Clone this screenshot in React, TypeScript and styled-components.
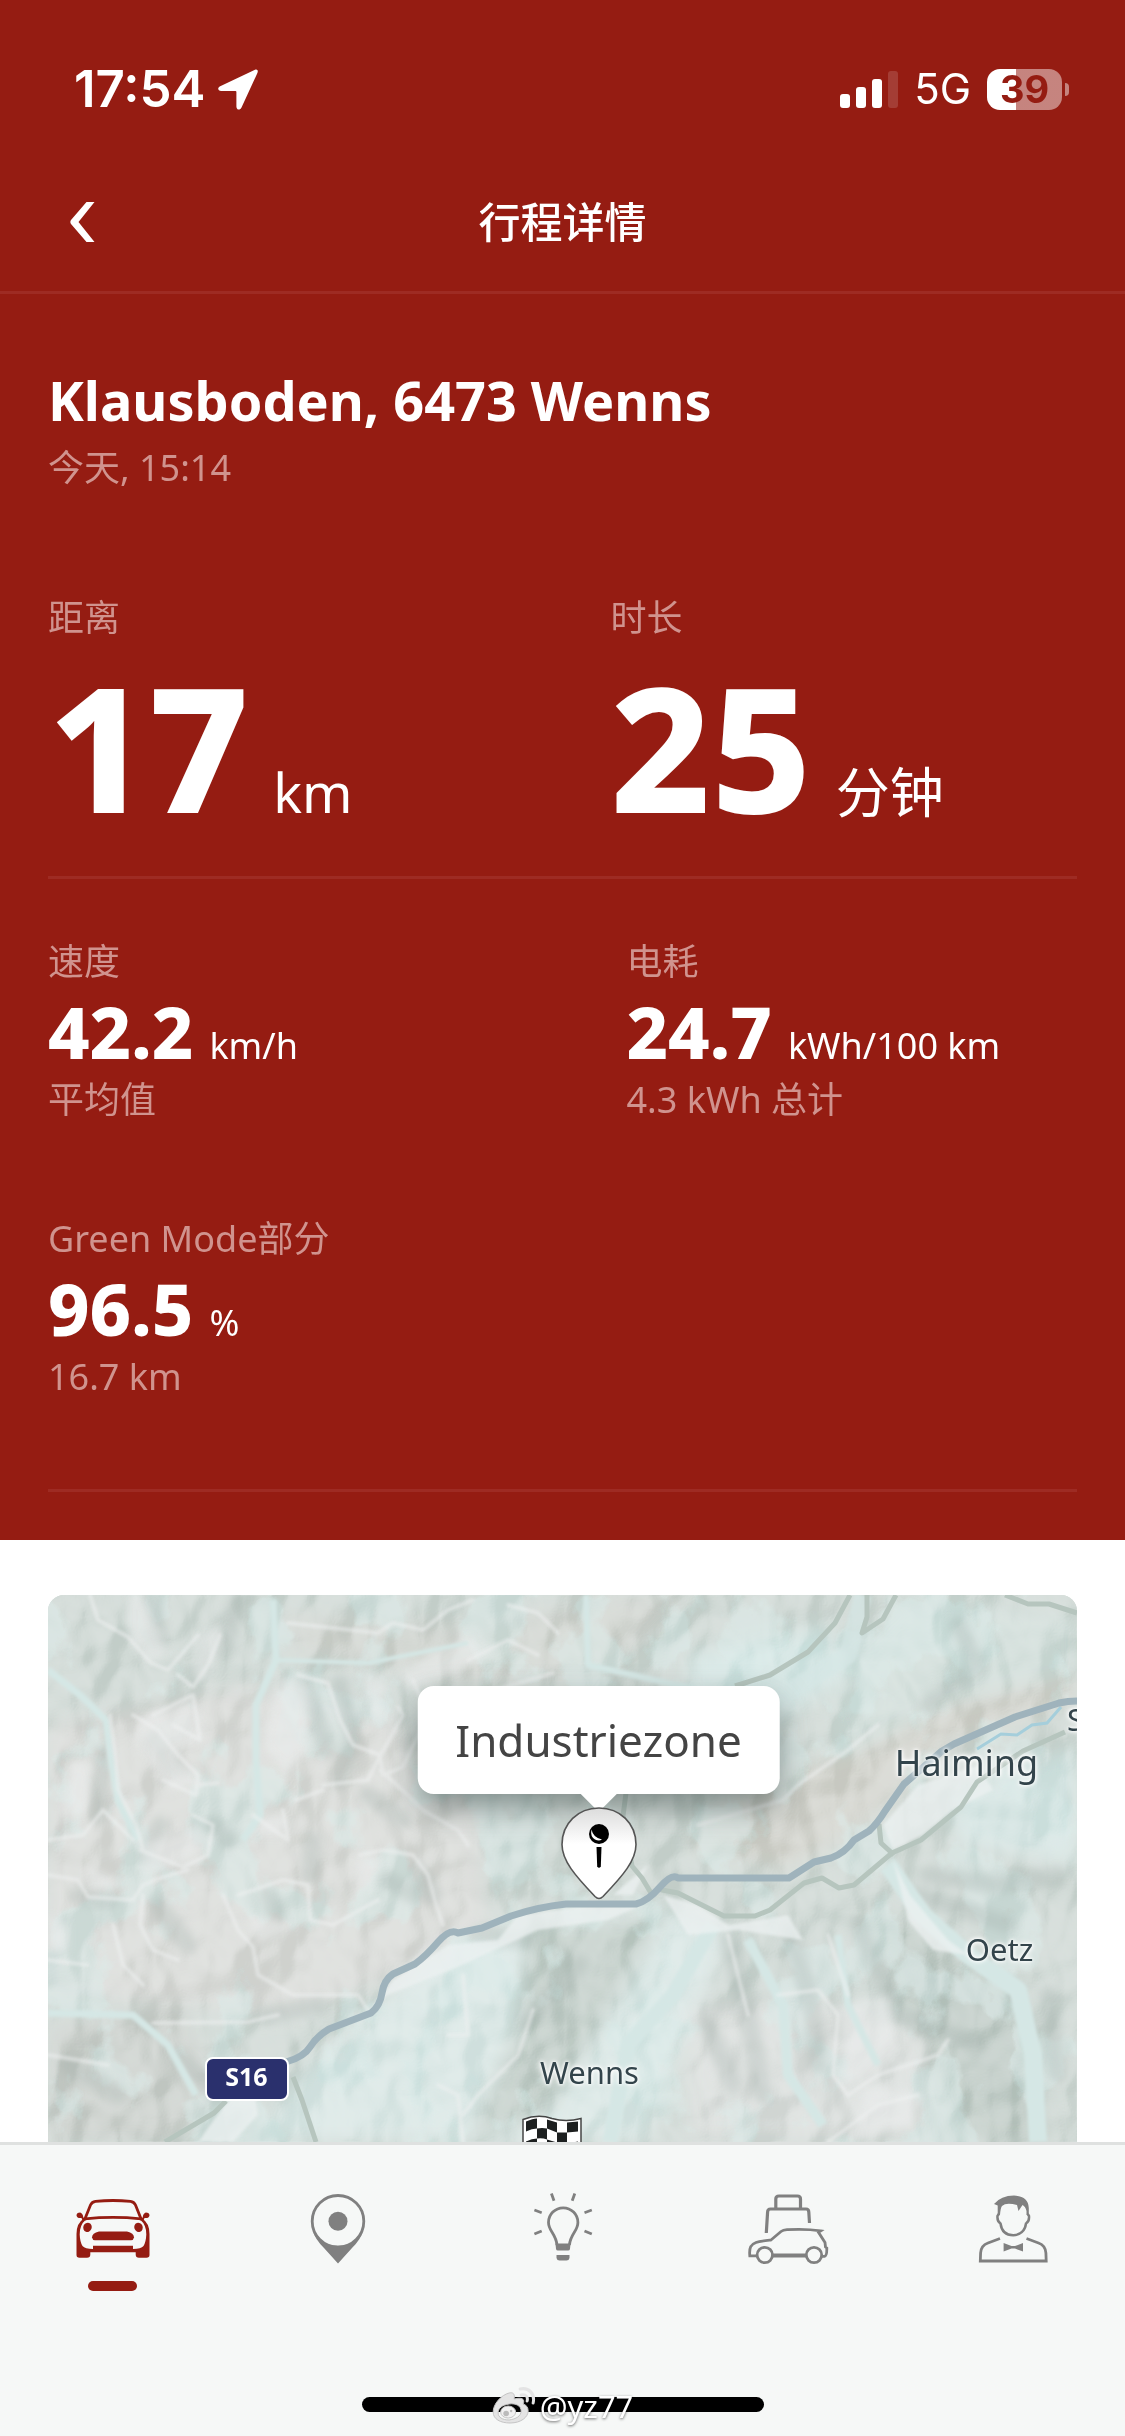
import { ReactNode, useState } from 'react';
import styled, { createGlobalStyle } from 'styled-components';

const red = '#951c12';
const grey = '#808080';

const GlobalStyle = createGlobalStyle`
  * {
    box-sizing: border-box;
  }

  body {
    margin: 0;
    font-family: 'Noto Sans', 'Noto Sans CJK SC', sans-serif;
    background-color: #fff;
  }
`;

const Screen = styled.div`
  display: flex;
  flex-direction: column;
  height: 100vh;
  overflow: hidden;
`;

const TopPanel = styled.div`
  flex-shrink: 0;
  color: #fff;
  background-color: ${red};
`;

const StatusBar = styled.div`
  display: flex;
  align-items: center;
  justify-content: space-between;
  height: 152px;
  padding: 26px 56px 0 74px;
  font-family: Inter, sans-serif;
`;

const StatusGroup = styled.div<{ $gap: number }>`
  display: flex;
  align-items: center;
  gap: ${({ $gap }) => $gap}px;
`;

const Clock = styled.span`
  font-size: 51px;
  line-height: 60px;
  font-weight: 600;
`;

const Network = styled.span`
  font-size: 42px;
  line-height: 60px;
`;

const BatteryWrap = styled.div`
  display: flex;
  align-items: center;
  gap: 3px;
`;

const Battery = styled.div`
  width: 75px;
  height: 41px;
  border-radius: 13px;
  background: linear-gradient(to right, #fff 39%, rgba(255, 255, 255, 0.46) 39%);
  color: ${red};
  font-size: 38px;
  line-height: 41px;
  font-weight: 700;
  text-align: center;
`;

const BatteryCap = styled.div`
  width: 4px;
  height: 13px;
  border-radius: 0 4px 4px 0;
  background-color: rgba(255, 255, 255, 0.46);
`;

const Header = styled.header`
  display: grid;
  grid-template-columns: 120px 1fr 120px;
  align-items: center;
  height: 142px;
  border-bottom: 3px solid #9e2b23;
`;

const BackButton = styled.button`
  display: flex;
  align-items: center;
  height: 100%;
  padding: 0 0 0 70px;
  border: none;
  background-color: transparent;
  color: #fff;
  cursor: pointer;
`;

const PageTitle = styled.h1`
  margin: 0;
  font-size: 42px;
  line-height: 60px;
  font-weight: 500;
  text-align: center;
`;

const Trip = styled.section`
  padding: 70px 48px 48px;
`;

const Place = styled.h2`
  margin: 0 0 8px;
  font-size: 54px;
  line-height: 72px;
  font-weight: 700;
`;

const Muted = styled.p`
  margin: 0;
  font-size: 36px;
  line-height: 48px;
  font-weight: 400;
  color: #d0938e;
`;

const Totals = styled.div`
  display: grid;
  grid-template-columns: 1fr 1fr;
  column-gap: 96px;
  margin-top: 102px;
`;

const Details = styled.div`
  display: grid;
  grid-template-columns: 1fr 1fr;
  gap: 91px 128px;
  padding: 59px 0 88px;
`;

const Value = styled.div<{ $large?: boolean }>`
  display: flex;
  align-items: baseline;
  gap: ${({ $large }) => ($large ? 24 : 16)}px;
  height: ${({ $large }) => ($large ? 160 : 72)}px;
  margin: ${({ $large }) => ($large ? '24px 0 50px' : '9px 0')};
  white-space: nowrap;
`;

const Amount = styled.strong<{ $large?: boolean }>`
  font-size: ${({ $large }) => ($large ? 174 : 72)}px;
  line-height: ${({ $large }) => ($large ? 160 : 72)}px;
  font-weight: 800;
`;

const Unit = styled.span<{ $large?: boolean }>`
  font-size: ${({ $large }) => ($large ? 54 : 36)}px;
  line-height: ${({ $large }) => ($large ? 60 : 48)}px;
  font-weight: 400;
`;

const Divider = styled.hr`
  height: 3px;
  margin: 0;
  border: none;
  background-color: #9e2b23;
`;

const MapSection = styled.section`
  display: flex;
  flex: 1;
  min-height: 0;
  padding: 55px 48px 0;
`;

const MapCard = styled.div`
  position: relative;
  flex: 1;
  overflow: hidden;
  border-radius: 16px 16px 0 0;
  background-color: #d3dcd8;
`;

const MapDrawing = styled.svg`
  display: block;
  width: 100%;
  height: 100%;
`;

/* x is measured from the middle of the map */
const Spot = styled.div<{ $x: number; $y: number }>`
  position: absolute;
  left: calc(50% + ${({ $x }) => $x}px);
  top: ${({ $y }) => $y}px;
  transform: translate(-50%, -50%);
`;

const Town = styled.span<{ $big?: boolean }>`
  display: block;
  font-size: ${({ $big }) => ($big ? 36 : 31)}px;
  line-height: 48px;
  color: #33444b;
  text-shadow: 0 0 3px #fff, 0 0 4px #fff, 0 0 6px #fff;
`;

const RoadSign = styled.span`
  display: block;
  width: 84px;
  height: 44px;
  border: 2px solid #fff;
  border-radius: 8px;
  background-color: #2a306d;
  color: #fff;
  font-size: 25px;
  line-height: 35px;
  font-weight: 700;
  text-align: center;
`;

const Bubble = styled.div`
  position: relative;
  padding: 24px 38px;
  border-radius: 16px;
  background-color: #fff;
  box-shadow: 0 14px 30px rgba(60, 75, 72, 0.55);
  color: #444;
  font-size: 44px;
  line-height: 60px;

  &::after {
    content: '';
    position: absolute;
    top: 100%;
    left: 50%;
    margin-left: -18px;
    border: 18px solid transparent;
    border-top-color: #fff;
    border-bottom: none;
  }
`;

const BottomPanel = styled.div`
  flex-shrink: 0;
  padding-bottom: 24px;
  border-top: 3px solid #dfe1e0;
  background-color: #f6f8f7;
`;

const Tabs = styled.nav`
  display: flex;
  height: 228px;
  padding-top: 39px;
`;

const Tab = styled.button<{ $active: boolean }>`
  display: flex;
  flex: 1;
  flex-direction: column;
  align-items: center;
  gap: 7px;
  padding: 0;
  border: none;
  background-color: transparent;
  color: ${({ $active }) => ($active ? red : grey)};
  cursor: pointer;

  &::after {
    content: '';
    width: 49px;
    height: 10px;
    border-radius: 5px;
    background-color: ${({ $active }) => ($active ? red : 'transparent')};
  }
`;

const HomeArea = styled.div`
  position: relative;
  display: flex;
  justify-content: center;
  padding-top: 24px;
`;

const HomeBar = styled.div`
  width: 402px;
  height: 15px;
  border-radius: 8px;
  background-color: #000;
`;

const Watermark = styled.div`
  position: absolute;
  left: 50%;
  bottom: -14px;
  display: flex;
  align-items: center;
  gap: 4px;
  transform: translateX(-50%);
  color: #fff;
  font-size: 31px;
  line-height: 40px;
  text-shadow: 0 1px 3px rgba(0, 0, 0, 0.6);
`;

const LocationArrow = () => (
  <svg width="40" height="41" viewBox="0 0 40 41" fill="currentColor" aria-hidden="true">
    <path d="M37 .8 2.2 17.2C-.9 18.7-.2 22 3.200 22H17.500c.6 0 .9.3.9.9V37.500c0 3.600 3.600 4.200 5.100 1L39.400 4C40.500 1.600 39.200-.2 37 .8Z" />
  </svg>
);

const Signal = () => (
  <svg width="58" height="37" viewBox="0 0 58 37" fill="currentColor" aria-hidden="true">
    <rect x="0" y="23" width="10" height="14" rx="3" />
    <rect x="16" y="16" width="10" height="21" rx="3" />
    <rect x="32" y="8" width="10" height="29" rx="3" />
    <rect x="48" y="0" width="10" height="37" rx="3" opacity=".15" />
  </svg>
);

const BackIcon = () => (
  <svg width="25" height="40" viewBox="0 0 25 40" fill="currentColor" aria-hidden="true">
    <path d="M16.500 0H24.500L8.500 20 24.500 40H16.500L1 22Q-.3 20 1 18Z" />
  </svg>
);

const CarIcon = () => (
  <svg width="90" height="90" viewBox="0 0 90 90" fill="currentColor" aria-hidden="true">
    <path d="M16.500 36 22.500 21Q24 17.700 27.500 17.300Q45 15.700 62.500 17.300Q66 17.700 67.500 21L73.500 36" fill="none" stroke="currentColor" strokeWidth="2.800" />
    <path d="M17 34.800Q45 32 73 34.800" fill="none" stroke="currentColor" strokeWidth="2.800" />
    <path d="M8.500 31.500Q8.500 28.500 12.200 28.500 15 29.500 15.200 33L17 36 14.500 36.500 13.500 34Q9 34.500 8.500 31.500Z" />
    <path d="M81.500 31.500Q81.500 28.500 77.800 28.500 75 29.500 74.800 33L73 36 75.500 36.500 76.500 34Q81 34.500 81.500 31.500Z" />
    <path
      fillRule="evenodd"
      d="M16 34.500Q8.500 39 8.500 50V71Q8.500 73.800 11.500 73.800H19Q22.300 73.800 22.300 70.500V68.300H67.700V70.500Q67.700 73.800 71 73.800H78.500Q81.500 73.800 81.500 71V50Q81.500 39 74 34.500L72 35.500Q78.500 41 78.300 50.500Q78 58 75.500 62 73 65 65 65V61.700H25V65Q17 65 14.500 62 12 58 11.700 50.500 11.500 41 18 35.500Z"
    />
    <ellipse cx="19.500" cy="43.300" rx="4.200" ry="4.700" transform="rotate(20 19.500 43.300)" />
    <ellipse cx="70.500" cy="43.300" rx="4.200" ry="4.700" transform="rotate(-20 70.500 43.300)" />
    <path d="M31 47.500H59Q66 49 66 53.500 65.500 56.200 63 56.200H27Q24.500 56.200 24 53.500 24 49 31 47.500Z" />
  </svg>
);

const PlaceIcon = () => (
  <svg width="90" height="90" viewBox="0 0 90 90" fill="currentColor" aria-hidden="true">
    <circle cx="45" cy="37.300" r="25.800" fill="none" stroke="currentColor" strokeWidth="2.800" />
    <circle cx="45" cy="37.300" r="9.500" />
    <path d="M19.800 47Q22 55 31 64L45 79.500 59 64Q68 55 70.200 47 63 61.800 45 61.800 27 61.800 19.800 47Z" />
  </svg>
);

const BulbIcon = () => (
  <svg width="90" height="90" viewBox="0 0 90 90" fill="currentColor" aria-hidden="true">
    <path d="M39 61C38 50 30.500 47 30.500 38.500A14.700 14.700 0 0 1 59.900 38.500C59.900 47 52.500 50 51.400 61" fill="none" stroke="currentColor" strokeWidth="2.800" />
    <path d="M37.500 59.500H52.500L52 65Q51.700 66.500 50 66.500H40Q38.300 66.500 38 65ZM38.500 71H51.500V74Q51 76.500 48.500 76.500H41.500Q39 76.500 38.500 74Z" />
    <path d="M33.400 9.500 36 16.800M56.800 9.500 54.200 16.800M73.800 26 66.500 28.700M73.800 50 66.500 47M16.400 26 23.700 28.700M16.400 50 23.700 47" stroke="currentColor" strokeWidth="2.800" />
  </svg>
);

const TravelIcon = () => (
  <svg width="90" height="90" viewBox="0 0 90 90" fill="none" stroke="currentColor" strokeWidth="2.800" aria-hidden="true">
    <path d="M32.800 24V15Q32.800 12 36 12H54.300Q57.500 12 57.500 15V24" strokeWidth="3.200" />
    <path d="M23.300 49 24.600 28Q24.700 25 27.500 25H63Q65.700 25 65.800 28L66.500 39" strokeWidth="3.200" />
    <path d="M14 71.800H6.800C6 63 8 60.500 13 58.500 17 57 22 56.600 28 56L38 47.500Q40 46 44 45.700 62 44.500 77.800 46.800L75.500 48.300 82 58.500 82.500 63 83.800 64Q84 72 81.500 72.300H79" />
    <path d="M30 71.500H63" strokeWidth="4.200" />
    <circle cx="21.800" cy="71" r="7.700" />
    <circle cx="71" cy="71" r="7.700" />
  </svg>
);

const PersonIcon = () => (
  <svg width="90" height="90" viewBox="0 0 90 90" fill="currentColor" aria-hidden="true">
    <path d="M26 20Q33 11.500 46 11.500 60.500 12 60.800 24V31H58.500V27Q57.500 22.500 54.500 21L50.500 27 49 21Q38 18 34 22 32.500 24 32 31H29.700V21.500Z" />
    <path d="M30.800 30 29.500 32Q29 37.500 32.500 39.500C33.500 47 38 51.200 45.200 51.200 52 51.200 57 47 58 39.500Q61.500 37.500 61 32L59.700 30" fill="none" stroke="currentColor" strokeWidth="2.500" />
    <path d="M32 54.500 20 59Q13 61.500 12.600 69L12.300 77H78.200L77.900 69Q77.500 61.500 70.500 59L58.500 54.500" fill="none" stroke="currentColor" strokeWidth="2.800" />
    <path d="M35.600 59 43.500 62H47L55 59V67.500L47 64.500H43.500L35.600 67.500Z" />
  </svg>
);

const WeiboIcon = () => (
  <svg width="44" height="38" viewBox="0 0 44 38" aria-hidden="true">
    <path
      fillRule="evenodd"
      d="M17 6C9 8 1 17 1 25 1 32 8 36 18 36 29 36 36 30 36 24 36 20 34 18 31 17 33 12 30 10 22 12 23 7 21 5 17 6ZM17 17C24 16 29 19 29 24 29 29 24 32 17 33 10 33 6 30 6 26 6 21 10 18 17 17Z"
      fill="#e4e4e4"
      stroke="#c4c4c4"
    />
    <ellipse cx="16" cy="25" rx="7.500" ry="6" fill="#f1f1f1" stroke="#c4c4c4" />
    <circle cx="14" cy="26.500" r="2.800" fill="#bbb" />
    <circle cx="19" cy="24" r="1.200" fill="#bbb" />
    <path d="M28 2C37 0 43 7 41 16M29 8C34 7 36 10 35 14" fill="none" stroke="#e4e4e4" strokeWidth="3" strokeLinecap="round" />
  </svg>
);

const PinMarker = () => (
  <svg width="78" height="94" viewBox="0 0 78 94" aria-hidden="true">
    <defs>
      <linearGradient id="pinShade" x1="0" y1="0" x2="0" y2="1">
        <stop offset="0" stopColor="#dcdcdc" />
        <stop offset=".4" stopColor="#fff" />
      </linearGradient>
    </defs>
    <path d="M39 1.500C18 1.500 2 17 2 38 2 54 15 69 35 90Q39 94 43 90C63 69 76 54 76 38 76 17 60 1.500 39 1.500Z" fill="url(#pinShade)" stroke="#555" strokeWidth="1.600" />
    <circle cx="39" cy="27.500" r="10" />
    <path d="M31.500 23Q30 30 35 33 39 35 42 33 33 31 31.500 23Z" fill="#fff" />
    <path d="M36.500 40.500H41.500L40.800 60Q39 62.500 37.200 60Z" />
  </svg>
);

const FinishFlag = () => (
  <svg width="62" height="46" viewBox="0 0 62 46" aria-hidden="true">
    <path d="M2 5Q17-1 31 4 45 8 60 4V46H2Z" fill="#fff" stroke="#444" strokeWidth="1.500" />
    <path d="M5 7Q12 4 16 4V14Q11 14 5 17ZM26 5 36 8V18L26 14ZM46 8 57 7V17L46 18ZM16 14Q21 13 26 14V25Q21 23 16 24ZM36 18 46 18V29L36 28ZM5 27Q11 24 16 24V35L5 38ZM26 25 36 28V38L26 35ZM46 29 57 27V38L46 39ZM16 35H26V46H16ZM36 38H46V46H36Z" fill="#1d2020" />
  </svg>
);

const Terrain = () => (
  <MapDrawing viewBox="0 0 1029 547" preserveAspectRatio="xMidYMin slice" aria-hidden="true">
    <defs>
      <filter id="relief" x="0" y="0" width="100%" height="100%" colorInterpolationFilters="sRGB">
        <feTurbulence type="fractalNoise" baseFrequency=".014 .011" numOctaves="3" seed="8" />
        <feDiffuseLighting surfaceScale="50" diffuseConstant="1" lightingColor="#fff">
          <feDistantLight azimuth="215" elevation="48" />
        </feDiffuseLighting>
      </filter>
      <filter id="cover" x="0" y="0" width="100%" height="100%" colorInterpolationFilters="sRGB">
        <feTurbulence type="fractalNoise" baseFrequency=".014 .012" numOctaves="5" seed="21" />
        <feColorMatrix values="0 0 0 0 .84  0 0 0 0 .91  0 0 0 0 .9  14 0 0 0 -7.500" />
      </filter>
      <filter id="soft">
        <feGaussianBlur stdDeviation="9" />
      </filter>
      <filter id="edge">
        <feGaussianBlur stdDeviation="1.500" />
      </filter>
      <filter id="slope">
        <feGaussianBlur stdDeviation="4" />
      </filter>
    </defs>
    <rect width="1029" height="547" fill="#d0d9d5" />

    <g filter="url(#soft)">
      <path d="M0 130 200 90 340 120 430 200 440 350 240 420 0 400Z" fill="#dadcd9" />
      <path d="M230 20 420 30 560 0 640 0 560 80 420 90 250 60Z" fill="#d2d6d1" />
      <path d="M860 0 1029 20V90L900 130 800 180 780 80Z" fill="#d2deda" />
      <path d="M640 250 700 180 800 160 900 110 1029 80V105L900 150 820 230 740 275Z" fill="#d4d5cf" />
      <path d="M260 470 400 350 520 318 620 312 680 340 620 480 600 547H200Z" fill="#dae7e5" />
      <path d="M480 330 620 320 560 420 500 520 420 547 470 430Z" fill="#c5d0cb" />
      <path d="M820 310 900 350 980 400 1000 547H930L850 420Z" fill="#c2cdc8" />
      <path d="M0 430 130 410 180 500 120 547H0Z" fill="#cdd2ce" />
      <path d="M640 410 760 400 880 440 880 547H640Z" fill="#dbdfdd" />
      <path d="M900 200 1029 150V270L910 250Z" fill="#d6e5e3" />
      <path d="M640 60 780 30 800 80 700 150 640 180Z" fill="#d5e6e4" />
    </g>

    <rect width="1029" height="547" filter="url(#cover)" opacity=".5" />
    <rect width="1029" height="547" filter="url(#relief)" opacity=".36" style={{ mixBlendMode: 'soft-light' }} />

    {/* shaded slopes */}
    <g fill="none" stroke="#9faca7" strokeWidth="18" strokeLinecap="round" strokeLinejoin="round" opacity=".28" filter="url(#slope)">
      <path d="M105 5 110 45M190 5 175 55M105 145 130 175M55 160 50 220M255 90 280 155M112 230 100 260" />
      <path d="M292 90 305 145 292 185M430 110 362 150M320 200 355 225M220 300 230 320M110 310 140 350" />
      <path d="M165 230 180 245M265 245 262 280M340 285 365 300M370 275 385 300M30 300 60 305" />
      <path d="M680 345 700 420 715 500M740 335 762 400 770 470M660 430 685 490M810 330 850 420 930 450" />
      <path d="M910 30 930 70 880 110M880 280 950 290 1010 280M870 300 960 330M1000 400 1010 480" />
      <path d="M480 425 530 370M430 340 480 345M130 460 170 500M220 420 270 410M20 470 70 500" />
    </g>

    {/* sunlit slopes */}
    <g fill="#eceeee" opacity=".55" filter="url(#slope)">
      <path d="M100 120 150 105 155 145 125 160 150 190 120 195 85 140Z" />
      <path d="M80 0 95 0 120 60 100 70 80 40ZM150 40 175 25 160 90 145 80Z" />
      <path d="M230 80 260 90 262 150 240 180 215 150ZM310 75 340 90 330 105 345 130 320 115Z" />
      <path d="M350 80 420 40 450 60 400 80 360 95ZM20 165 45 170 40 215 15 230Z" />
      <path d="M95 250 150 230 165 245 130 270 95 280ZM210 225 235 220 235 240 205 240Z" />
      <path d="M40 270 80 290 40 295ZM310 260 335 260 325 290 308 295ZM200 320 250 330 210 350Z" />
      <path d="M0 320 20 330 20 355 0 360ZM790 410 840 400 850 440 800 490ZM820 490 880 500 860 530 800 547Z" />
    </g>

    {/* valleys */}
    <g fill="none" stroke="#d5e7e5" strokeLinejoin="round" filter="url(#edge)">
      <path d="M0 75 32 100 58 125 64 170 70 205 90 245" strokeWidth="7" />
      <path d="M225 5 228 65 208 110 208 165 212 220 195 245" strokeWidth="7" />
      <path d="M0 418 85 420 120 450 148 500" strokeWidth="7" />
      <path d="M228 65 320 68 420 48" strokeWidth="4" />
      <path d="M538 0 540 70 650 95 700 110" strokeWidth="6" />
      <path d="M665 330 625 400 580 450 562 547" strokeWidth="15" />
      <path d="M840 270 875 320 920 360 970 395 985 460 990 547" strokeWidth="18" />
      <path d="M700 345 735 410 740 480 775 530" strokeWidth="10" />
      <path d="M790 340 800 410 830 470" strokeWidth="7" />
      <path d="M815 0 800 60 720 110 640 170" strokeWidth="18" opacity=".7" />
    </g>
    <g fill="#edf2f2" opacity=".75" filter="url(#edge)">
      <path d="M310 430 345 385 400 350 450 345 470 320 530 312 590 312 560 325 490 335 410 372 340 400Z" />
      <path d="M835 230 870 190 930 170 945 195 905 215 875 240 845 255Z" />
      <path d="M615 300 650 310 680 330 740 320 755 345 690 335 640 340Z" />
      <path d="M845 265 862 300 900 345 920 360 885 355 860 325Z" />
      <path d="M600 270 585 300 565 300Z" />
      <path d="M175 512 205 480 210 520 185 547H150Z" />
    </g>

    {/* ridge lines */}
    <g fill="none" stroke="#eff1f1" strokeWidth="4" strokeLinejoin="round" strokeLinecap="round" opacity=".55" filter="url(#edge)">
      <path d="M42 0 50 25 80 42 103 68 120 75 150 40M130 80 145 92 160 70 172 40" />
      <path d="M62 120 68 165 70 195 88 230 95 255M85 120 110 135 130 160 150 180 148 200 115 185" />
      <path d="M105 120 145 100 152 145 125 130M148 190 170 188" />
      <path d="M240 28 330 38 345 28 375 35 400 15 425 5M460 10 490 18 510 38" />
      <path d="M250 80 280 88 292 125 305 150 332 160 335 180 355 172 380 120 365 85" />
      <path d="M350 112 355 120 330 165 320 185 275 190" />
      <path d="M332 175 360 200 375 215 410 235 420 250" />
      <path d="M312 260 335 255 365 260 380 280 388 310 395 330" />
      <path d="M0 280 30 285 40 302 85 305 95 290 115 282 140 275" />
      <path d="M95 300 92 330 105 355 130 365M92 255 135 272 160 260 165 230 145 220" />
      <path d="M175 300 190 335 205 352 210 380 245 400 310 400 320 415" />
      <path d="M190 300 235 285 260 290 262 325 285 330 330 305" />
      <path d="M0 365 40 370M105 428 200 427 230 420M0 460 60 470M65 330 75 370 95 390" />
      <path d="M0 245 35 240 55 215 85 245M205 220 240 245 235 215M248 205 275 195" />
      <path d="M415 380 420 440 400 440M390 490 410 500 415 547M485 415 470 460 430 500 415 520" />
      <path d="M650 230 735 205 750 190 800 155 830 130M730 400 770 395 790 420 785 480 800 500" />
      <path d="M800 500 830 480 890 460 900 445M780 547 830 510 870 500M700 420 680 340M780 340 800 400" />
      <path d="M430 100 465 90 505 78M420 65 460 45 490 60" />
    </g>

    {/* secondary roads */}
    <g fill="none" stroke="#b6c5be" strokeWidth="5" strokeLinejoin="round">
      <path d="M609 294 630 298 676 321H707L722 315 756 288 774 283 791 293 806 290 844 258 873 245 913 212 929 187 975 156 1017 137" />
      <path d="M831 229 833 248 846 260M578 198 575 221 584 271 594 283 603 298" />
      <path d="M802 0 787 28 760 57 722 80 687 91" />
      <path d="M819 0V22L814 38 835 24 848 0M957 0 980 9 1001 9 1029 18" />
      <path d="M117 547 166 518 178 506M245 482 254 505 268 547" />
    </g>
    <path d="M929 154 953 139 969 140 984 130 999 128 1013 112" fill="none" stroke="#a5cedb" strokeWidth="3" />
    <path
      d="M238 467Q256 462 262 452T281 434L323 418Q332 411 334 398T345 379L367 369Q378 361 390 347T410 338L434 333 463 321Q490 312 518 309H588Q600 306 612 292T630 283H741L766 267 783 263Q797 258 806 245L821 236Q829 229 837 216L856 189 894 156 906 149 967 122 1011 108Q1020 106 1029 106"
      fill="none"
      stroke="#9fb3bc"
      strokeWidth="7"
      strokeLinejoin="round"
    />
  </MapDrawing>
);

interface TabItem {
  id: string;
  label: string;
  icon: ReactNode;
}

const tabs: TabItem[] = [
  { id: 'car', label: '车辆', icon: <CarIcon /> },
  { id: 'places', label: '地点', icon: <PlaceIcon /> },
  { id: 'tips', label: '发现', icon: <BulbIcon /> },
  { id: 'travel', label: '出行', icon: <TravelIcon /> },
  { id: 'profile', label: '我的', icon: <PersonIcon /> },
];

interface StatProps {
  label: string;
  amount: string;
  unit: string;
  note?: string;
  large?: boolean;
}

const Stat = ({ label, amount, unit, note, large }: StatProps) => (
  <div>
    <Muted>{label}</Muted>
    <Value $large={large}>
      <Amount $large={large}>{amount}</Amount>
      <Unit $large={large}>{unit}</Unit>
    </Value>
    {note && <Muted>{note}</Muted>}
  </div>
);

function App() {
  const [activeTab, setActiveTab] = useState<string>('car');

  return (
    <>
      <GlobalStyle />
      <Screen>
        <TopPanel>
          <StatusBar>
            <StatusGroup $gap={12}>
              <Clock>17:54</Clock>
              <LocationArrow />
            </StatusGroup>
            <StatusGroup $gap={16}>
              <Signal />
              <Network>5G</Network>
              <BatteryWrap>
                <Battery>39</Battery>
                <BatteryCap />
              </BatteryWrap>
            </StatusGroup>
          </StatusBar>
          <Header>
            <BackButton aria-label="返回">
              <BackIcon />
            </BackButton>
            <PageTitle>行程详情</PageTitle>
          </Header>
          <Trip>
            <Place>Klausboden, 6473 Wenns</Place>
            <Muted>今天, 15:14</Muted>
            <Totals>
              <Stat large label="距离" amount="17" unit="km" />
              <Stat large label="时长" amount="25" unit="分钟" />
            </Totals>
            <Divider />
            <Details>
              <Stat label="速度" amount="42.2" unit="km/h" note="平均值" />
              <Stat label="电耗" amount="24.7" unit="kWh/100 km" note="4.3 kWh 总计" />
              <Stat label="Green Mode部分" amount="96.5" unit="%" note="16.7 km" />
            </Details>
            <Divider />
          </Trip>
        </TopPanel>

        <MapSection>
          <MapCard>
            <Terrain />
            <Spot $x={404} $y={168}>
              <Town $big>Haiming</Town>
            </Spot>
            <Spot $x={513} $y={124}>
              <Town>S</Town>
            </Spot>
            <Spot $x={437} $y={354}>
              <Town>Oetz</Town>
            </Spot>
            <Spot $x={27} $y={477}>
              <Town>Wenns</Town>
            </Spot>
            <Spot $x={-316} $y={484}>
              <RoadSign>S16</RoadSign>
            </Spot>
            <Spot $x={-11} $y={545}>
              <FinishFlag />
            </Spot>
            <Spot $x={36} $y={145}>
              <Bubble>Industriezone</Bubble>
            </Spot>
            <Spot $x={36} $y={261}>
              <PinMarker />
            </Spot>
          </MapCard>
        </MapSection>

        <BottomPanel>
          <Tabs>
            {tabs.map(tab => (
              <Tab
                key={tab.id}
                $active={tab.id === activeTab}
                aria-label={tab.label}
                onClick={() => setActiveTab(tab.id)}
              >
                {tab.icon}
              </Tab>
            ))}
          </Tabs>
          <HomeArea>
            <HomeBar />
            <Watermark>
              <WeiboIcon />
              <span>@yz77</span>
            </Watermark>
          </HomeArea>
        </BottomPanel>
      </Screen>
    </>
  );
}

export default App;
